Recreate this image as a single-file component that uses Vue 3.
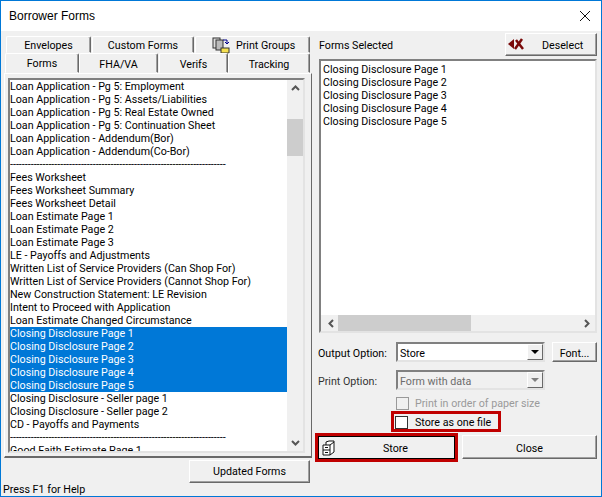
<script setup>
const dashes = '-'.repeat(73)
const rows = [
  ['Loan Application - Pg 5: Employment'],['Loan Application - Pg 5: Assets/Liabilities'],['Loan Application - Pg 5: Real Estate Owned'],['Loan Application - Pg 5: Continuation Sheet'],['Loan Application - Addendum(Bor)'],['Loan Application - Addendum(Co-Bor)'],
  [dashes],
  ['Fees Worksheet'],['Fees Worksheet Summary'],['Fees Worksheet Detail'],['Loan Estimate Page 1'],['Loan Estimate Page 2'],['Loan Estimate Page 3'],['LE - Payoffs and Adjustments'],['Written List of Service Providers (Can Shop For)'],['Written List of Service Providers (Cannot Shop For)'],['New Construction Statement: LE Revision'],['Intent to Proceed with Application'],['Loan Estimate Changed Circumstance'],
  ['Closing Disclosure Page 1',1],['Closing Disclosure Page 2',1],['Closing Disclosure Page 3',1],['Closing Disclosure Page 4',1],['Closing Disclosure Page 5',1],
  ['Closing Disclosure - Seller page 1'],['Closing Disclosure - Seller page 2'],['CD - Payoffs and Payments'],
  [dashes],
  ['Good Faith Estimate Page 1'],
]
const selected = [1,2,3,4,5].map(n => `Closing Disclosure Page ${n}`)
</script>

<template>
  <div class="win">
    <div class="title">
      <span>Borrower Forms</span>
      <svg class="x" width="12" height="12" viewBox="0 0 12 12"><path d="M1 1l10 10M11 1L1 11" stroke="#111" stroke-width="1" fill="none"/></svg>
    </div>
    <div class="body">
      <div class="left">
        <div class="tabrow back">
          <div class="tab t1">Envelopes</div>
          <div class="tab t2">Custom Forms</div>
          <div class="tab t3">
            <svg width="18" height="17" viewBox="0 0 18 17"><rect x="1" y="1" width="7" height="10" fill="#ddd" stroke="#333"/><rect x="4" y="3" width="7" height="10" fill="#bbb" stroke="#333"/><rect x="9" y="11" width="8" height="5" fill="#f5e050" stroke="#333"/><path d="M11 3h4v4M13 5l2 2 2-2" fill="none" stroke="#00008b"/></svg>
            <span>Print Groups</span>
          </div>
        </div>
        <div class="tabrow front">
          <div class="tab active f1">Forms</div>
          <div class="tab f2">FHA/VA</div>
          <div class="tab f3">Verifs</div>
          <div class="tab f4">Tracking</div>
        </div>
        <div class="panel">
          <div class="list forms">
            <div class="items">
              <div v-for="(r, i) in rows" :key="i" class="item" :class="{ sel: r[1] }">{{ r[0] }}</div>
            </div>
            <div class="vbar">
              <svg class="arrow" width="9" height="6" viewBox="0 0 9 6"><path d="M1 5l3.500-3.500L8 5" fill="none" stroke="#555" stroke-width="2"/></svg>
              <div class="vtrack"><div class="vthumb"></div></div>
              <svg class="arrow" width="9" height="6" viewBox="0 0 9 6"><path d="M1 1l3.500 3.500L8 1" fill="none" stroke="#555" stroke-width="2"/></svg>
            </div>
          </div>
        </div>
        <div class="under"><div class="btn updated">Updated Forms</div></div>
      </div>
      <div class="right">
        <div class="head">
          <span class="low">Forms Selected</span>
          <div class="btn deselect">
            <svg width="17" height="13" viewBox="0 0 17 13"><path d="M0 6l6-5v10z" fill="#7a0a0a"/><path d="M7 11L14 1M8 2l7 9" stroke="#7a0a0a" stroke-width="2.500" fill="none"/></svg>
            <span class="low">Deselect</span>
          </div>
        </div>
        <div class="list chosen">
          <div class="chosen-items"><div v-for="s in selected" :key="s" class="item">{{ s }}</div></div>
          <div class="hbar">
            <svg width="6" height="9" viewBox="0 0 6 9"><path d="M5 1L1.500 4.500 5 8" fill="none" stroke="#555" stroke-width="2"/></svg>
            <div class="htrack"><div class="hthumb"></div></div>
            <svg width="6" height="9" viewBox="0 0 6 9"><path d="M1 1l3.500 3.500L1 8" fill="none" stroke="#555" stroke-width="2"/></svg>
          </div>
        </div>
        <div class="opt o1">
          <label class="low">Output Option:</label>
          <div class="combo"><span class="low">Store</span><i class="drop"><b></b></i></div>
          <div class="btn font"><span class="low">Font...</span></div>
        </div>
        <div class="opt o2">
          <label class="dim low">Print Option:</label>
          <div class="combo off"><span class="low">Form with data</span><i class="drop"><b></b></i></div>
        </div>
        <div class="check c1"><i class="box"></i><span>Print in order of paper size</span></div>
        <div class="redwrap"><div class="check c2"><i class="box"></i><span>Store as one file</span></div></div>
        <div class="actions">
          <div class="btn store">
            <svg width="14" height="16" viewBox="0 0 14 16"><path d="M1 5h7v10H1zM8 5l4-3v10l-4 3M4 5V2l3-1h5v1M1 10h7M3 7.500h3M3 12.500h3" fill="#fff" stroke="#111"/></svg>
            <span class="low">Store</span>
          </div>
          <div class="btn close"><span class="low">Close</span></div>
        </div>
      </div>
    </div>
    <div class="status">Press F1 for Help</div>
  </div>
</template>

<style>
html, body { margin: 0; background: #f0f0f0; }
</style>

<style scoped>
.win { width: 602px; height: 497px; box-sizing: border-box; border: 1px solid #0078d7; background: #f0f0f0; font: 10.7px/13px Roboto, "Liberation Sans", sans-serif; color: #000; overflow: hidden; display: flex; flex-direction: column; }
.low { padding-top: 2px; }
.title { height: 30px; background: #fff; display: flex; align-items: center; justify-content: space-between; padding: 0 10px 0 8px; font: 12px/13px "Liberation Sans", sans-serif; }
.body { flex: 1; display: flex; min-height: 0; }
.left { width: 309px; margin-left: 2px; }
.right { width: 279px; margin-left: 6px; }
.tabrow { display: flex; }
.tabrow.back { margin: 5px 0 0 3px; height: 17px; }
.tabrow.front { height: 20px; }
.tab { box-sizing: border-box; display: flex; align-items: center; justify-content: center; gap: 6px; background: #f0f0f0; border: 1px solid #a0a0a0; border-color: #fff #696969 #f0f0f0 #fff; border-radius: 2px 2px 0 0; padding-top: 2px; box-shadow: inset -1px 0 0 #a0a0a0; }
.t1 { width: 85px; }
.t2 { width: 102px; margin-left: 1px; }
.t3 { width: 115px; margin-left: 1px; justify-content: flex-start; padding-left: 16px; }
.front .tab { height: 20px; padding-top: 3px; }
.front .f1 { width: 74px; margin-left: 2px; padding: 1px 0 1px; position: relative; z-index: 1; }
.f2 { width: 79px; }
.f3 { width: 69px; margin-left: 1px; }
.f4 { width: 82px; }
.panel { box-sizing: border-box; width: 308px; height: 385px; border: 1px solid #fff; border-right-color: #696969; border-bottom: 2px solid #696969; padding: 4px 5px 0 3px; margin-left: 1px; }
.list { box-sizing: border-box; background: #fff; border: 2px solid; border-color: #808080 #e3e3e3 #e3e3e3 #808080; }
.forms { width: 297px; height: 375px; display: flex; overflow: hidden; }
.items { flex: 1; overflow: hidden; min-width: 0; }
.item { height: 13px; line-height: 13px; white-space: nowrap; }
.sel { background: #0078d7; color: #fff; }
.vbar { width: 16px; flex: none; background: #f0f0f0; display: flex; flex-direction: column; align-items: center; }
.arrow { margin: 5px 0; flex: none; }
.vtrack { flex: 1; width: 100%; padding-top: 23px; }
.vthumb { height: 37px; background: #cdcdcd; }
.chosen { width: 278px; height: 274px; margin: 3px 0 0 1px; display: flex; flex-direction: column; }
.chosen-items { flex: 1; padding: 2px 0 0 2px; }
.hbar { height: 16px; background: #f0f0f0; display: flex; align-items: center; padding: 0 5px 0 7px; }
.htrack { flex: 1; height: 100%; padding-left: 4px; }
.hthumb { width: 133px; height: 100%; background: #cdcdcd; }
.head { display: flex; justify-content: space-between; align-items: center; height: 23px; margin-top: 2px; padding-left: 1px; }
.btn { box-sizing: border-box; display: flex; align-items: center; justify-content: center; background: #f0f0f0; border: 1px solid; border-color: #fff #696969 #696969 #fff; box-shadow: inset -1px -1px 0 #a0a0a0; }
.deselect { width: 92px; height: 23px; justify-content: flex-start; padding-left: 2px; gap: 17px; }
.opt { display: flex; align-items: center; height: 20px; }
.o1 { margin-top: 9px; }
.o2 { margin-top: 8px; }
.opt label { width: 78px; }
.dim { color: #333; }
.combo { box-sizing: border-box; width: 149px; height: 20px; background: #fff; border: 2px solid; border-color: #808080 #e3e3e3 #e3e3e3 #808080; display: flex; align-items: center; justify-content: space-between; padding-left: 2px; }
.combo.off { background: #f0f0f0; color: #6d6d6d; }
.drop { width: 16px; height: 16px; background: #f0f0f0; border: 1px solid; box-sizing: border-box; border-color: #fff #696969 #696969 #fff; display: flex; align-items: center; justify-content: center; }
.drop b { border: 4px solid transparent; border-top: 4px solid #000; border-bottom: 0; }
.off .drop b { border-top-color: #808080; }
.font { width: 45px; height: 20px; margin-left: 7px; }
.check { display: flex; align-items: center; gap: 6px; white-space: nowrap; }
.box { box-sizing: border-box; width: 13px; height: 13px; background: #fff; border: 1px solid #333; display: block; flex: none; }
.c1 { margin: 7px 0 0 78px; color: #9a9a9a; }
.c1 .box { background: #f0f0f0; border-color: #999; }
.c2 { gap: 7px; }
.redwrap { box-sizing: border-box; width: 110px; height: 21px; margin: 1px 0 0 73px; border: 3px solid #c00000; display: flex; align-items: center; padding: 1px 0 0 1px; }
.actions { display: flex; align-items: flex-start; margin: 1px 0 0 -3px; }
.store { width: 143px; height: 29px; border: 3px solid #c00000; outline: 1px solid #000; outline-offset: -4px; position: relative; padding-left: 18px; }
.store svg { position: absolute; left: 4px; top: 4px; }
.close { width: 135px; height: 24px; margin: 2px 0 0 4px; }
.under { display: flex; justify-content: flex-end; }
.updated { width: 121px; height: 23px; margin: 2px 2px 0 0; }
.status { height: 15px; padding: 2px 0 0 2px; box-sizing: border-box; }
</style>
